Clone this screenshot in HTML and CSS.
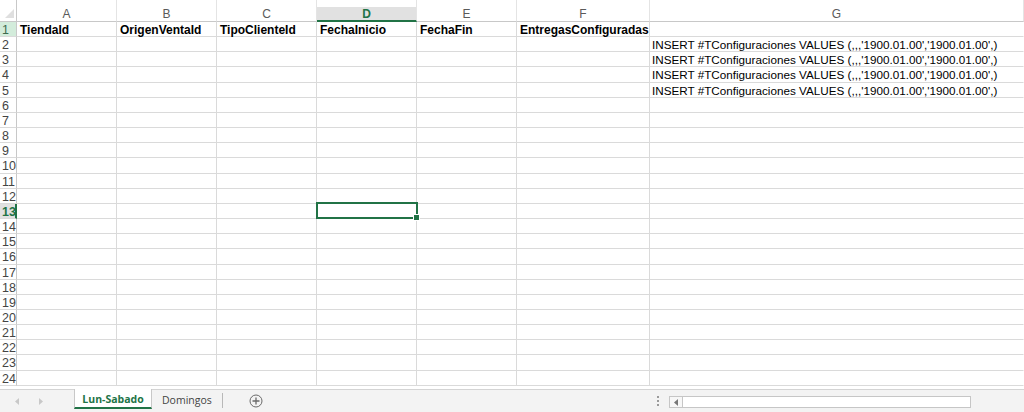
FILE: index.html
```html
<!DOCTYPE html>
<html lang="es">
<head>
<meta charset="UTF-8" />
<meta name="viewport" content="width=device-width, initial-scale=1" />
<title>Libro1 - Excel</title>
<link rel="stylesheet" href="styles.css">
</head>
<body>

<div class="sheet">
  <div id="grid" class="grid"></div>
</div>

<div class="tabbar">
  <div class="nav">
    <svg width="5" height="7" viewBox="0 0 5 7"><path d="M4 0 L0 3.5 L4 7 Z" fill="#c8c8c8"/></svg>
    <svg width="5" height="7" viewBox="0 0 5 7"><path d="M1 0 L5 3.5 L1 7 Z" fill="#c8c8c8"/></svg>
  </div>
  <div class="tab active">Lun-Sabado</div>
  <div class="tab">Domingos</div>
  <div class="add">
    <svg width="14" height="14" viewBox="0 0 14 14">
      <circle cx="7" cy="7" r="6" fill="none" stroke="#6a6a6a" stroke-width="1"/>
      <path d="M7 3.5 V10.5 M3.5 7 H10.5" stroke="#6a6a6a" stroke-width="1.3"/>
    </svg>
  </div>
  <div class="spacer"></div>
  <div class="dots"><span></span><span></span><span></span></div>
  <div class="hscroll">
    <div class="hbtn">
      <svg width="4" height="7" viewBox="0 0 4 7"><path d="M4 0 L0 3.5 L4 7 Z" fill="#777"/></svg>
    </div>
  </div>
</div>

<script>
  const grid = document.getElementById('grid');
  const cols = ['A', 'B', 'C', 'D', 'E', 'F', 'G'];
  const insert = "INSERT #TConfiguraciones VALUES (,,,'1900.01.00','1900.01.00',)";

  const data = {
    1: ['TiendaId', 'OrigenVentaId', 'TipoClienteId', 'FechaInicio', 'FechaFin', 'EntregasConfiguradas', ''],
    2: ['', '', '', '', '', '', insert],
    3: ['', '', '', '', '', '', insert],
    4: ['', '', '', '', '', '', insert],
    5: ['', '', '', '', '', '', insert]
  };

  function addCell(cls, text) {
    const div = document.createElement('div');
    div.className = cls;
    div.textContent = text || '';
    grid.appendChild(div);
    return div;
  }

  // column headers
  const corner = addCell('corner');
  corner.innerHTML = '<span class="tri"></span>';
  cols.forEach(c => addCell(c === 'D' ? 'colhead sel' : 'colhead', c));

  // rows
  for (let r = 1; r <= 24; r++) {
    let rowCls = 'rowhead';
    if (r === 1) rowCls += ' first';
    if (r === 13) rowCls += ' sel';
    addCell(rowCls, r);

    const values = data[r] || [];
    cols.forEach((c, i) => {
      let cls = 'cell';
      if (r === 1) cls += ' bold';
      if (r === 13 && c === 'D') cls += ' active';
      addCell(cls, values[i]);
    });
  }
</script>

</body>
</html>
```

FILE: styles.css
```css
body {
  margin: 0;
  width: 1024px;
  height: 412px;
  overflow: hidden;
  font-family: "Liberation Sans", Arial, sans-serif;
  background-color: #fff;
}
.sheet {
  height: 389px;
  overflow: hidden;
}
.grid {
  display: grid;
  grid-template-columns: 17px 100px 100px 100px 100px 100px 133px 374px;
  grid-template-rows: 22px repeat(24, 15.17px);
  width: 1024px;
}
.grid > div {
  box-sizing: border-box;
  border-right: 1px solid #dadada;
  border-bottom: 1px solid #dadada;
  font-size: 11.7px;
  white-space: nowrap;
  overflow: visible;
}
.corner {
  display: flex;
  align-items: flex-end;
  justify-content: flex-end;
  padding: 0 2px 3px 0;
  border-right-color: #c8c8c8 !important;
  border-bottom-color: #c8c8c8 !important;
}
.tri {
  width: 0;
  height: 0;
  border-left: 9px solid transparent;
  border-bottom: 9px solid #dfdfdf;
}
.colhead {
  padding-top: 7px;
  line-height: 14px;
  text-align: center;
  color: #5a5a5a;
  font-size: 12px !important;
  border-bottom-color: #c8c8c8 !important;
  border-right-color: #e4e4e4 !important;
}
.colhead.sel {
  background: linear-gradient(to bottom, #fff 7px, #e1e1e1 7px);
  color: #217346;
  font-weight: bold;
  border-bottom: 2px solid #217346 !important;
}
.rowhead {
  padding: 1px 0 0 2px;
  line-height: 14px;
  color: #444;
  font-size: 12.5px !important;
  border-right-color: #c8c8c8 !important;
}
.rowhead.first {
  background-color: #d3ecdb;
  color: #3d6b4f;
}
.rowhead.sel {
  background-color: #e1e1e1;
  color: #217346;
  font-weight: bold;
  border-right: 2px solid #217346 !important;
}
.cell {
  padding: 1px 0 0 2px;
  line-height: 14px;
  color: #000;
}
.grid > div:nth-child(8n) {
  border-right-color: transparent;
}
.cell.bold {
  font-weight: bold;
  font-size: 12px;
  padding-left: 3px;
}
.cell.active {
  position: relative;
}
.cell.active::before {
  content: "";
  position: absolute;
  top: -2px;
  left: -1px;
  right: -2px;
  bottom: -1px;
  border: 2px solid #217346;
}
.cell.active::after {
  content: "";
  position: absolute;
  right: -4px;
  bottom: -3px;
  width: 5px;
  height: 5px;
  background-color: #217346;
  border: 1px solid #fff;
}
.tabbar {
  display: flex;
  align-items: stretch;
  height: 22px;
  background-color: #f3f3f3;
  border-top: 1px solid #d4d4d4;
  font-family: "Open Sans", "Liberation Sans", sans-serif;
  font-size: 10.5px;
  white-space: nowrap;
}
.nav {
  width: 74px;
  display: flex;
  align-items: center;
  gap: 18px;
  padding-left: 15px;
  box-sizing: border-box;
}
.tab {
  padding: 0 10px;
  line-height: 20px;
  color: #444;
}
.tab.active {
  width: 78px;
  padding: 0;
  box-sizing: border-box;
  margin-top: -1px;
  text-align: center;
  background-color: #fff;
  color: #217346;
  font-weight: bold;
  border-left: 1px solid #c8c8c8;
  border-right: 1px solid #c8c8c8;
  border-bottom: 2px solid #217346;
  line-height: 21px;
  height: 20px;
}
.tab + .tab:not(.active) {
  border-right: 1px solid #b8b8b8;
  margin: 3px 0 4px;
  line-height: 15px;
}
.add {
  display: flex;
  align-items: center;
  padding-left: 26px;
}
.spacer {
  flex: 1;
}
.dots {
  display: flex;
  flex-direction: column;
  justify-content: center;
  gap: 2px;
  width: 12px;
}
.dots span {
  width: 2px;
  height: 2px;
  background-color: #9a9a9a;
}
.hscroll {
  align-self: center;
  width: 302px;
  height: 12px;
  margin-right: 53px;
  margin-top: 2px;
  box-sizing: border-box;
  background-color: #fff;
  border: 1px solid #c6c6c6;
  display: flex;
}
.hbtn {
  width: 12px;
  border-right: 1px solid #c6c6c6;
  display: flex;
  align-items: center;
  justify-content: center;
  background-color: #f7f7f7;
}
```
